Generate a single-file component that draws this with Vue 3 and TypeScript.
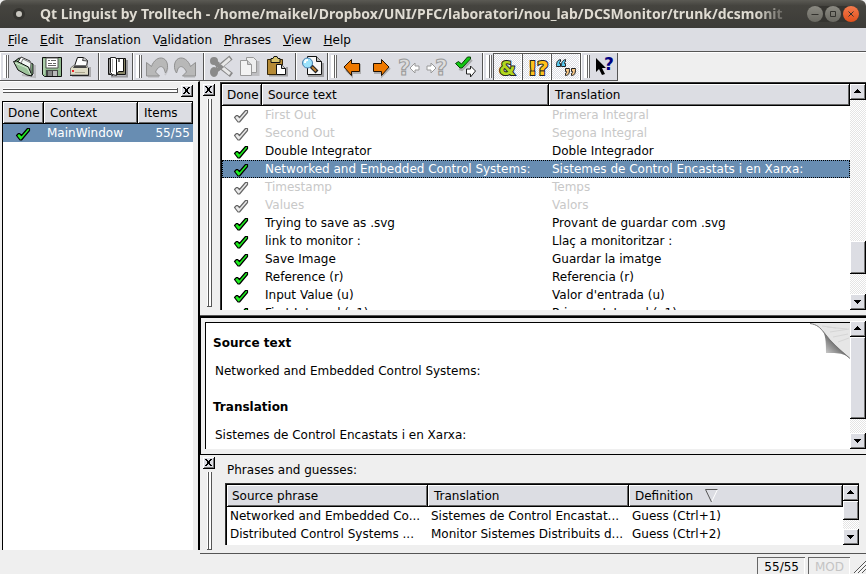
<script setup lang="ts">
interface Message {
  source: string
  translation: string
  state: 'done' | 'obsolete'
}
interface Phrase {
  source: string
  translation: string
  definition: string
}

const title =
  'Qt Linguist by Trolltech - /home/maikel/Dropbox/UNI/PFC/laboratori/nou_lab/DCSMonitor/trunk/dcsmonit'

const menus: [string, string, string][] = [
  ['', 'F', 'ile'],
  ['', 'E', 'dit'],
  ['', 'T', 'ranslation'],
  ['V', 'a', 'lidation'],
  ['', 'P', 'hrases'],
  ['', 'V', 'iew'],
  ['', 'H', 'elp'],
]

const messages: Message[] = [
  { source: 'First Out', translation: 'Primera Integral', state: 'obsolete' },
  { source: 'Second Out', translation: 'Segona Integral', state: 'obsolete' },
  { source: 'Double Integrator', translation: 'Doble Integrador', state: 'done' },
  {
    source: 'Networked and Embedded Control Systems:',
    translation: 'Sistemes de Control Encastats i en Xarxa:',
    state: 'done',
  },
  { source: 'Timestamp', translation: 'Temps', state: 'obsolete' },
  { source: 'Values', translation: 'Valors', state: 'obsolete' },
  { source: 'Trying to save as .svg', translation: 'Provant de guardar com .svg', state: 'done' },
  { source: 'link to monitor :', translation: 'Llaç a monitoritzar :', state: 'done' },
  { source: 'Save Image', translation: 'Guardar la imatge', state: 'done' },
  { source: 'Reference (r)', translation: 'Referencia (r)', state: 'done' },
  { source: 'Input Value (u)', translation: "Valor d'entrada (u)", state: 'done' },
  { source: 'First Integral (x1)', translation: 'Primera Integral (x1)', state: 'done' },
]
const selected = 3

const phrases: Phrase[] = [
  {
    source: 'Networked and Embedded Co...',
    translation: 'Sistemes de Control Encastat...',
    definition: 'Guess (Ctrl+1)',
  },
  {
    source: 'Distributed Control Systems ...',
    translation: 'Monitor Sistemes Distribuits d...',
    definition: 'Guess (Ctrl+2)',
  },
]
</script>

<template>
  <div class="window">
    <svg class="defs" width="0" height="0" aria-hidden="true">
      <symbol id="check" viewBox="0 0 16 14">
        <path d="M1.500 8.500l2-2h1l2 2 6-7h2v2l-8 9.500h-1.500z" fill="currentColor" stroke="#000" stroke-width="1.200" stroke-linejoin="round" />
      </symbol>
      <symbol id="close" viewBox="0 0 7 7">
        <path d="M0 0h2v1h1v1h1V1h1V0h2v1H6v1H5v1h0v1h0v1h1v1h1v1H5V6H4V5H3v1H2v1H0V6h1V5h1V4V3V2H1V1H0z" />
      </symbol>
      <symbol id="up" viewBox="0 0 7 5"><path d="M3 0h1v1h1v1h1v1h1v1H0V3h1V2h1V1h1z" /></symbol>
      <symbol id="down" viewBox="0 0 7 5"><path d="M3 5h1V4h1V3h1V2h1V1H0v1h1v1h1v1h1z" /></symbol>
    </svg>

    <header class="titlebar">
      <button class="orb" aria-label="Window menu"></button>
      <h1>{{ title }}</h1>
      <div class="controls">
        <button aria-label="Minimize"><svg width="16" height="16"><path d="M4.500 8.500h7" /></svg></button>
        <button aria-label="Maximize"><svg width="16" height="16"><path d="M5.500 5.500h5v5h-5z" /></svg></button>
        <button class="quit" aria-label="Close"><svg width="16" height="16"><path d="M5.500 5.500l5 5m0-5l-5 5" /></svg></button>
      </div>
    </header>

    <nav class="menubar">
      <button v-for="m in menus" :key="m.join('')">{{ m[0] }}<u>{{ m[1] }}</u>{{ m[2] }}</button>
    </nav>

    <div class="toolbars">
      <div class="group">
        <i class="grip"></i>
        <button aria-label="Open">
          <svg viewBox="0 0 24 24" width="24" height="24">
            <path d="M10 20l13 2V10" fill="none" stroke="#999" stroke-width="2" opacity=".5" />
            <path d="M3 6l4-3 3 1 11 5v10l-2 2z" fill="#7da77c" stroke="#111" />
            <path d="M6 7l3-5 9 4 1 12z" fill="#fff" stroke="#333" />
            <path d="M9 8l2-4 8 4-1 9z" fill="#f3f6f3" stroke="#777" />
            <path d="M1.500 6.500l3-.5 12 6 3.500 9-5-1L6 15z" fill="#9cc39a" stroke="#111" />
            <path d="M3 8l12 5 4 7" fill="none" stroke="#d5e9d3" />
          </svg>
        </button>
        <button aria-label="Save">
          <svg viewBox="0 0 24 24" width="24" height="24">
            <path d="M2.500 2.500h19v19h-17l-2-2z" fill="#8fb98d" stroke="#111" />
            <path d="M6 3h12v10H6z" fill="#fff" stroke="#555" />
            <path d="M8 5.500h2m1 0h5M8 8.500h4m1 0h3M8 10.500h8" stroke="#666" />
            <path d="M6 15h12v6H6z" fill="#444" /><path d="M8 16h4v5H8z" fill="#888" />
            <path d="M13 16h4v5h-4z" fill="#bbb" /><path d="M4 4v15" stroke="#cbe2c9" />
          </svg>
        </button>
        <button aria-label="Print">
          <svg viewBox="0 0 24 24" width="24" height="24">
            <path d="M4 21h18V12" fill="none" stroke="#777" stroke-width="2" opacity=".5" />
            <path d="M6.500 11l3-8.500h6l4 3-1 6.500z" fill="#fff" stroke="#111" />
            <path d="M15.500 2.500l-1 3 5 .5" fill="#ccc" stroke="#444" />
            <path d="M2.500 13l3-2.500h13l2 2.500v7h-18z" fill="#dedbc5" stroke="#777" />
            <path d="M2 20.500h18.500V13" fill="none" stroke="#222" /><path d="M6 11h12l1 2H5z" fill="#444" />
            <path d="M4 15h2v2H4z" fill="#e22" /><path d="M7 17.500h10" stroke="#aaa68f" />
          </svg>
        </button>
        <i class="sep"></i>
        <button class="book" aria-label="Phrase book">
          <svg viewBox="0 0 24 24" width="24" height="24">
            <path d="M6 21.500h16V5" fill="none" stroke="#555" stroke-width="2" opacity=".5" />
            <path d="M3.500 3.500h17v16h-17z" fill="#8b8869" stroke="#111" />
            <path d="M3.500 3.500l4 1v16l-4-2z" fill="#999" stroke="#111" />
            <path d="M5.500 2.500h5l1 2v16l-4-1-2-2z" fill="#fff" stroke="#222" />
            <path d="M11.500 4.500l1-1h6v13h-5l-2 3z" fill="#fff" stroke="#111" />
            <path d="M13 4h2v3h-2z" fill="#777" /><path d="M7.500 4v13" stroke="#aaa" />
          </svg>
        </button>
      </div>

      <div class="group">
        <i class="grip"></i>
        <button aria-label="Undo" disabled>
          <svg viewBox="0 0 24 24" width="24" height="24">
            <path d="M3 22h11M20 20c3-4 3-9 1-12" fill="none" stroke="#aaa" stroke-width="2" opacity=".4" />
            <path d="M1.500 7.500v13.500h13l-4-4c2-5 6-7 8-4 1 1 1 3 2 5 3-4 3-12-2-14.500-5-2-10 2-12 8z" fill="#b8b8b8" stroke="#909090" />
          </svg>
        </button>
        <button aria-label="Redo" disabled>
          <svg viewBox="0 0 24 24" width="24" height="24">
            <path d="M11 22h11" stroke="#aaa" stroke-width="2" opacity=".4" />
            <path d="M22.500 7.500v13.500h-13l4-4c-2-5-6-7-8-4-1 1-1 3-2 5-3-4-3-12 2-14.500 5-2 10 2 12 8z" fill="#b8b8b8" stroke="#909090" />
          </svg>
        </button>
        <i class="sep"></i>
        <button aria-label="Cut" disabled>
          <svg viewBox="0 0 24 24" width="24" height="24">
            <path d="M22 2.500L8 14M22.500 20L7 8" stroke="#888" stroke-width="5" />
            <path d="M21 3.500L9 14M21 19L9 9" stroke="#e8e8e8" stroke-width="3" />
            <g fill="none" stroke="#8a8a8a" stroke-width="4"><ellipse cx="5" cy="6" rx="2" ry="2" /><ellipse cx="5" cy="17" rx="2" ry="3" /><path d="M7 8l5 4-5 4" /></g>
          </svg>
        </button>
        <button aria-label="Copy" disabled>
          <svg viewBox="0 0 24 24" width="24" height="24">
            <path d="M15 19.500h6V6" fill="none" stroke="#aaa" stroke-width="3" opacity=".6" />
            <path d="M9.500 2.500h7l3 3v12h-10z" fill="#eee" stroke="#999" />
            <path d="M3.500 5.500h7l4 4v11h-11z" fill="#f3f3f3" stroke="#999" /><path d="M10.500 5.500v4h4" fill="#ccc" stroke="#999" />
          </svg>
        </button>
        <button aria-label="Paste">
          <svg viewBox="0 0 24 24" width="24" height="24">
            <path d="M4 20.500h18V12" fill="none" stroke="#777" stroke-width="2" opacity=".6" />
            <path d="M2.500 4.500h15v15h-15z" fill="#b58a35" stroke="#352608" />
            <path d="M6 3.500h2l1-2h3l1 2h2v4H6z" fill="#d9c66f" stroke="#111" />
            <path d="M11.500 9.500h5l4 4v6h-9z" fill="#fff" stroke="#111" /><path d="M16.500 9.500v4h4" fill="#ccc" stroke="#111" />
          </svg>
        </button>
        <i class="sep"></i>
        <button aria-label="Find">
          <svg viewBox="0 0 24 24" width="24" height="24">
            <path d="M7 21h15V8" fill="none" stroke="#777" stroke-width="2" opacity=".6" />
            <path d="M6.500 1.500h9l5 5v13h-14z" fill="#f7f7f7" stroke="#111" /><path d="M15.500 1.500v5h5" fill="#bbb" stroke="#111" />
            <path d="M10 11l6 6" stroke="#222" stroke-width="4" /><path d="M11 12l4 4" stroke="#c38435" stroke-width="2" />
            <circle cx="6.500" cy="8" r="5" fill="#9be2fb" stroke="#467cad" /><path d="M4 8c0-3 1-3 3-3" fill="none" stroke="#fff" stroke-width="2" />
          </svg>
        </button>
      </div>

      <div class="group jump">
        <i class="grip"></i>
        <button aria-label="Previous">
          <svg viewBox="0 0 24 24" width="24" height="24">
            <path d="M6 15l6 6v-3h8V9" fill="none" stroke="#999" stroke-width="2" opacity=".7" />
            <path d="M4 12l7.500-7.500v4h8v8h-8v4L4 12z" fill="#ee7900" stroke="#211000" />
          </svg>
        </button>
        <button aria-label="Next">
          <svg viewBox="0 0 24 24" width="24" height="24">
            <path d="M6 18h8v3l8-8" fill="none" stroke="#999" stroke-width="2" opacity=".7" />
            <path d="M21 12l-7.500-7.500v4h-8v8h8v4z" fill="#ee7900" stroke="#211000" />
          </svg>
        </button>
        <button aria-label="Previous unfinished" disabled>
          <svg viewBox="0 0 24 24" width="24" height="24" class="faded">
            <text x="2" y="20" font-size="22">?</text>
            <path d="M14 13l5-5v3h4v4h-4v3z" fill="#fff" stroke="#999" />
          </svg>
        </button>
        <button aria-label="Next unfinished" disabled>
          <svg viewBox="0 0 24 24" width="24" height="24" class="faded">
            <text x="11" y="20" font-size="22">?</text>
            <path d="M12 13L7 8v3H3v4h4v3z" fill="#fff" stroke="#999" />
          </svg>
        </button>
        <button aria-label="Done and next">
          <svg viewBox="0 0 24 24" width="24" height="24">
            <path d="M7 14l3 1 10-10" fill="none" stroke="#777" stroke-width="2" opacity=".5" />
            <path d="M3.500 8.500l3-2 3 2.500 6-7h3v2L10 13H8z" fill="#12c812" stroke="#064006" />
            <path d="M23.500 16l-5-5v3h-4v5h4v3z" fill="#fff" stroke="#222" />
          </svg>
        </button>
      </div>

      <div class="group">
        <i class="grip"></i>
        <button class="on" aria-label="Accelerators" aria-pressed="true">
          <svg viewBox="0 0 24 24" width="24" height="24"><text class="ink" x="3" y="20" font-size="19" fill="#b2d61e">&amp;</text></svg>
        </button>
        <button class="on" aria-label="Ending punctuation" aria-pressed="true">
          <svg viewBox="0 0 24 24" width="24" height="24"><text class="ink" x="3" y="20" font-size="20" fill="#ffc21a">!?</text></svg>
        </button>
        <button class="on" aria-label="Phrase matches" aria-pressed="true">
          <svg viewBox="0 0 24 24" width="24" height="24" stroke="#222" stroke-width="1">
            <path d="M6.500 4.500c-4 1-4 4-4 7h4v-3h-1c0-1 0-2 1-2zM11.500 4.500c-4 1-4 4-4 7h4v-3h-1c0-1 0-2 1-2z" fill="#57c8ee" />
            <path d="M11.500 13.500h4c0 3 0 7-4 7v-2c1 0 1-1 1-2h-1zM17.500 13.500h4c0 3 0 7-4 7v-2c1 0 1-1 1-2h-1z" fill="#f8c886" />
          </svg>
        </button>
      </div>

      <div class="group">
        <i class="grip"></i>
        <button class="help" aria-label="What's this">
          <svg viewBox="0 0 24 24" width="24" height="24">
            <path d="M4 3v14l3-3 3 6 3-1-3-6h4z" fill="#000" />
            <text x="12" y="15" font-size="17" font-weight="bold" fill="#000080">?</text>
          </svg>
        </button>
      </div>
    </div>

    <main class="work">
      <aside class="contexts">
        <div class="dockbar">
          <i class="rail"></i>
          <button class="x" aria-label="Close contexts"><svg width="7" height="7"><use href="#close" /></svg></button>
        </div>
        <div class="frame">
          <div class="pane">
            <table>
              <colgroup><col class="c-mark" /><col /><col class="c-items" /></colgroup>
              <thead><tr><th>Done</th><th>Context</th><th>Items</th></tr></thead>
              <tbody>
                <tr class="sel">
                  <td class="mark done"><svg width="16" height="14"><use href="#check" /></svg></td>
                  <td>MainWindow</td>
                  <td class="num">55/55</td>
                </tr>
              </tbody>
            </table>
          </div>
        </div>
      </aside>

      <div class="right">
        <section class="messages">
          <div class="dockside">
            <button class="x" aria-label="Close messages"><svg width="7" height="7"><use href="#close" /></svg></button>
            <i class="rail upright"></i>
          </div>
          <div class="frame">
            <div class="pane">
              <table>
                <colgroup><col class="c-done" /><col class="c-source" /><col /></colgroup>
                <thead><tr><th>Done</th><th>Source text</th><th>Translation</th></tr></thead>
                <tbody>
                  <tr v-for="(m, i) in messages" :key="m.source" :class="[m.state, { sel: i === selected, dotted: i === selected }]">
                    <td class="mark" :class="m.state"><svg width="16" height="14"><use href="#check" /></svg></td>
                    <td>{{ m.source }}</td>
                    <td>{{ m.translation }}</td>
                  </tr>
                </tbody>
              </table>
            </div>
            <div class="scroll">
              <button aria-label="Scroll up"><svg width="7" height="5"><use href="#up" /></svg></button>
              <i class="track before"></i><i class="thumb"></i><i class="track after"></i>
              <button aria-label="Scroll down"><svg width="7" height="5"><use href="#down" /></svg></button>
            </div>
          </div>
        </section>

        <section class="editor">
          <div class="page">
            <h2>Source text</h2>
            <p>Networked and Embedded Control Systems:</p>
            <h2>Translation</h2>
            <p>Sistemes de Control Encastats i en Xarxa:</p>
            <svg class="curl" width="40" height="36" viewBox="0 0 40 36">
              <defs><linearGradient id="fold" x1="1" y1="0" x2="0" y2="1"><stop offset=".4" stop-color="#555" /><stop offset="1" stop-color="#eee" /></linearGradient></defs>
              <path d="M0 0h40v35C30 30 20 20 14 11 10 4 6 1 0 0z" fill="#e6e6e6" />
              <path d="M13 8c3 6 3 14 3 22 8 0 16-1 24 5C30 26 20 18 13 8z" fill="url(#fold)" />
              <path d="M0 .5c7 1 10 4 14 9 7 10 16 18 26 26" fill="none" stroke="#777" />
              <path d="M17 4l20 2M20 9l19-3M23 14l15-3M28 19l11-4M12 3l14 2" stroke="#d6d6d6" />
            </svg>
          </div>
          <div class="scroll">
            <button aria-label="Scroll up"><svg width="7" height="5"><use href="#up" /></svg></button>
            <i class="thumb"></i><i class="track"></i>
            <button aria-label="Scroll down"><svg width="7" height="5"><use href="#down" /></svg></button>
          </div>
        </section>

        <section class="phrases">
          <div class="dockside">
            <button class="x" aria-label="Close phrases"><svg width="7" height="7"><use href="#close" /></svg></button>
            <i class="rail upright"></i>
          </div>
          <div class="guesses">
            <div class="caption">Phrases and guesses:</div>
            <div class="frame">
              <div class="pane">
                <table>
                  <colgroup><col class="c-phrase" /><col class="c-phrase" /><col /></colgroup>
                  <thead>
                    <tr>
                      <th>Source phrase</th>
                      <th>Translation</th>
                      <th>Definition<svg class="sort" width="13" height="14"><path d="M12.500.5L6.500 13" stroke="#fff" /><path d="M12.500.5H.5l6 12.500" stroke="#555" /></svg></th>
                    </tr>
                  </thead>
                  <tbody>
                    <tr v-for="p in phrases" :key="p.source">
                      <td>{{ p.source }}</td>
                      <td>{{ p.translation }}</td>
                      <td>{{ p.definition }}</td>
                    </tr>
                  </tbody>
                </table>
              </div>
              <div class="scroll">
                <button aria-label="Scroll up"><svg width="7" height="5"><use href="#up" /></svg></button>
                <i class="thumb"></i><i class="track"></i>
                <button aria-label="Scroll down"><svg width="7" height="5"><use href="#down" /></svg></button>
              </div>
            </div>
          </div>
        </section>
      </div>
    </main>

    <footer class="status">
      <span class="cell">55/55</span>
      <span class="cell off">MOD</span>
      <svg class="size" width="13" height="16"><path d="M1 16L13 4M5 16l8-8M9 16l4-4" stroke="#555" /><path d="M2 16.500L13 5.500M6 16.500l7-7" stroke="#fff" /></svg>
    </footer>
  </div>
</template>

<style>
body {
  margin: 0;
  background: #efefef;
}
</style>

<style scoped>
* {
  box-sizing: border-box;
}
.window {
  display: flex;
  flex-direction: column;
  height: 100vh;
  overflow: hidden;
  background: #efefef;
  color: #000;
  font: 12px/18px 'DejaVu Sans', sans-serif;
}
.defs {
  position: absolute;
}
button {
  margin: 0;
  padding: 0;
  border: 0;
  background: none;
  color: inherit;
  font: inherit;
}
svg {
  display: block;
  flex: none;
}
.titlebar {
  display: flex;
  align-items: center;
  flex: none;
  height: 28px;
  padding: 0 7px 0 13px;
  border-radius: 6px 6px 0 0;
  background: linear-gradient(#5b5a54, #45443f 20%, #3c3b37);
}
.orb {
  flex: none;
  width: 12px;
  height: 12px;
  border: 3px solid #34332f;
  border-radius: 50%;
  background: #c8c6bf;
}
h1 {
  flex: 1;
  min-width: 0;
  margin: 0 15px;
  overflow: hidden;
  white-space: nowrap;
  color: #dfdbd2;
  font: bold 14px/28px 'Noto Sans', sans-serif;
  mask-image: linear-gradient(to left, transparent, #000 36px);
}
.controls {
  display: flex;
  gap: 2px;
  border-radius: 10px;
  background: #353430;
}
.controls button {
  border-radius: 50%;
  background: linear-gradient(#8b8a82, #6a6962);
}
.controls .quit {
  background: linear-gradient(#f47b4d, #e0501c);
}
.controls path {
  fill: none;
  stroke: #33322e;
}
.menubar {
  display: flex;
  gap: 12px;
  flex: none;
  height: 24px;
  padding: 0 8px;
  border-bottom: 1px solid #555;
  background: #dcdde3;
}
.toolbars {
  display: flex;
  flex: none;
  height: 29px;
  border-top: 1px solid #fff;
}
.group {
  display: flex;
  border-right: 1px solid #555;
  border-bottom: 1px solid #555;
  box-shadow: inset 1px 0 #fff;
  background: #dcdde3;
}
.group button {
  display: flex;
  align-items: center;
  justify-content: center;
  width: 28px;
}
.group .book {
  width: 30px;
}
.group .help {
  width: 26px;
}
.group.jump {
  width: 155px;
}
.group .on {
  width: 29px;
  border: 1px solid #555;
  border-width: 1px 0 0 1px;
  box-shadow: inset -1px -1px #fff;
  background: repeating-conic-gradient(#dcdde3 0 25%, #fff 0 50%) 0 0 / 2px 2px;
}
.grip {
  width: 6px;
  margin: 2px 1px 2px 3px;
  border: 1px solid #666;
  border-width: 0 1px;
  background: linear-gradient(90deg, #fff 2px, #666 2px, #666 3px, #fff 3px);
  border-left-color: #fff;
}
.sep {
  width: 8px;
  background: linear-gradient(90deg, transparent 4px, #555 4px, #555 5px, #fff 5px, #fff 6px, transparent 6px);
}
.faded text {
  fill: #ddd;
  stroke: #999;
  stroke-width: 1;
  font-weight: bold;
}
.ink {
  paint-order: stroke;
  stroke: #222;
  stroke-width: 2;
  font-weight: bold;
}
.work {
  display: flex;
  flex: 1;
  min-height: 0;
}
.contexts {
  display: flex;
  flex-direction: column;
  width: 200px;
  flex: none;
  margin-bottom: 4px;
  padding: 2px 5px 0 2px;
  border-right: 2px solid #000;
  border-top: 1px solid #fff;
}
.dockbar {
  display: flex;
  align-items: center;
  gap: 3px;
  height: 17px;
  padding-bottom: 4px;
}
.rail {
  flex: 1;
  height: 5px;
  margin-left: 1px;
  border-right: 1px solid #555;
  background: linear-gradient(#fff 1px, #555 1px, #555 2px, #fff 2px, #fff 4px, #555 4px);
}
.upright {
  width: 5px;
  height: auto;
  margin: 0;
  border: 0;
  border-bottom: 1px solid #555;
  background: linear-gradient(90deg, #fff 1px, #555 1px, #555 2px, #fff 2px, #fff 4px, #555 4px);
}
.x {
  display: flex;
  align-items: center;
  justify-content: center;
  flex: none;
  width: 12px;
  height: 12px;
  border: 1px solid #000;
  border-width: 0 1px 1px 0;
  box-shadow: inset 1px 1px #fff, inset -1px -1px #777;
  background: #dcdde3;
}
.frame {
  display: flex;
  flex: 1;
  min-width: 0;
  min-height: 0;
  border: 1px solid #000;
  border-width: 1px 0 0 1px;
  background: #fff;
}
.messages .frame,
.guesses .frame {
  border-color: #333;
  box-shadow: inset 1px 1px #000;
  padding: 1px 0 0 1px;
}
.pane {
  flex: 1;
  min-width: 0;
  overflow: hidden;
}
table {
  width: 100%;
  table-layout: fixed;
  border-spacing: 0;
}
th,
td {
  overflow: hidden;
  text-align: left;
  white-space: nowrap;
  font-weight: normal;
}
th {
  height: 22px;
  padding: 0 0 0 6px;
  border: 1px solid #000;
  border-width: 0 1px 1px 0;
  box-shadow: inset 1px 1px #fff, inset -1px -1px #666;
  background: #dcdde3;
}
th:first-child {
  padding-left: 5px;
}
td {
  height: 18px;
  padding: 0 3px;
}
td.num {
  text-align: right;
}
.mark svg {
  margin: 2px auto 0;
}
td.mark {
  padding: 0 4px 0 2px;
}
.mark.done {
  color: #1ff01f;
}
.mark.obsolete {
  color: #ddd;
}
.mark.obsolete svg {
  opacity: 0.6;
}
.obsolete {
  color: #c8c8c8;
}
.sel {
  background: #688db2;
  color: #fff;
}
.dotted {
  outline: 1px dotted #000;
  outline-offset: -1px;
}
.c-done {
  width: 40px;
}
.c-mark {
  width: 41px;
}
.c-items {
  width: 55px;
}
.c-source {
  width: 287px;
}
.c-phrase {
  width: 201px;
}
.right {
  display: flex;
  flex-direction: column;
  flex: 1;
  min-width: 0;
}
.messages {
  display: flex;
  flex: 1;
  min-height: 0;
  padding: 1px 0 5px;
  border-bottom: 1px solid #555;
}
.dockside {
  display: flex;
  flex-direction: column;
  align-items: center;
  gap: 3px;
  flex: none;
  width: 20px;
  padding: 2px 2px 0 0;
}
.scroll {
  display: flex;
  flex-direction: column;
  flex: none;
  width: 16px;
}
.scroll button,
.thumb {
  border: 1px solid #000;
  border-width: 0 1px 1px 0;
  box-shadow: inset 1px 1px #fff, inset -1px -1px #777;
  background: #dcdde3;
}
.scroll button {
  display: flex;
  align-items: center;
  justify-content: center;
  flex: none;
  height: 16px;
}
.track {
  flex: 1;
  background: repeating-conic-gradient(#e4e4e4 0 25%, #fff 0 50%) 0 0 / 2px 2px;
}
.before {
  flex: 7;
}
.messages .thumb {
  height: 33px;
}
.editor {
  display: flex;
  flex: none;
  height: 139px;
  padding: 3px 0 5px 2px;
  border: 1px solid #000;
  border-width: 2px 0 1px 1px;
}
.page {
  position: relative;
  flex: 1;
  margin: 1px 0 0 2px;
  padding: 11px 7px 0;
  border: 1px solid #000;
  border-width: 1px 0 0 1px;
  background: #fff;
}
.page h2 {
  margin: 0;
  font: bold 12px/18px 'DejaVu Sans', sans-serif;
}
.page p {
  margin: 10px 2px 18px;
}
.curl {
  position: absolute;
  top: 0;
  right: 0;
}
.editor .thumb {
  flex: 6;
}
.phrases {
  display: flex;
  flex: none;
  height: 99px;
  border-bottom: 1px solid #555;
}
.phrases .dockside,
.messages .dockside {
  padding-bottom: 3px;
}
.guesses {
  display: flex;
  flex-direction: column;
  flex: 1;
  min-width: 0;
  padding: 6px 7px 8px 5px;
}
.caption {
  height: 22px;
  padding-left: 2px;
}
.guesses .thumb {
  flex: 2;
}
.sort {
  display: inline-block;
  margin-left: 12px;
  vertical-align: middle;
  fill: none;
}
.status {
  display: flex;
  justify-content: flex-end;
  gap: 3px;
  flex: none;
  height: 20px;
  padding: 3px 0 0;
}
.cell {
  padding: 0 6px;
  border: 1px solid #666;
  border-width: 1px 0 0 1px;
  box-shadow: inset -1px 0 #fff;
}
.off {
  color: #c4c4c4;
}
</style>
